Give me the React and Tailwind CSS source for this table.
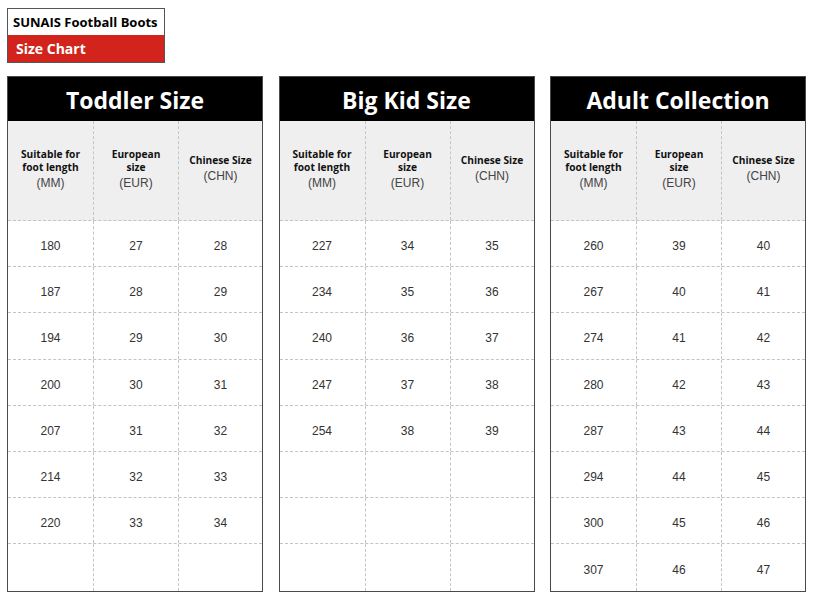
import React from "react";

const tables = [
  {
    title: "Toddler Size",
    rows: [
      ["180", "27", "28"],
      ["187", "28", "29"],
      ["194", "29", "30"],
      ["200", "30", "31"],
      ["207", "31", "32"],
      ["214", "32", "33"],
      ["220", "33", "34"],
      ["", "", ""],
    ],
  },
  {
    title: "Big Kid Size",
    rows: [
      ["227", "34", "35"],
      ["234", "35", "36"],
      ["240", "36", "37"],
      ["247", "37", "38"],
      ["254", "38", "39"],
      ["", "", ""],
      ["", "", ""],
      ["", "", ""],
    ],
  },
  {
    title: "Adult Collection",
    rows: [
      ["260", "39", "40"],
      ["267", "40", "41"],
      ["274", "41", "42"],
      ["280", "42", "43"],
      ["287", "43", "44"],
      ["294", "44", "45"],
      ["300", "45", "46"],
      ["307", "46", "47"],
    ],
  },
];

const heads = [
  [["Suitable for", "foot length"], "(MM)"],
  [["European", "size"], "(EUR)"],
  [["Chinese Size"], "(CHN)"],
];

function Table({ title, rows }) {
  return (
    <div className="w-[256px] border-[1.5px] border-[#4a4a4a] bg-white">
      <div className="h-[44px] bg-black text-white flex items-center justify-center font-['Open_Sans',sans-serif] font-bold text-[23px] leading-none pt-[2px]">
        {title}
      </div>
      <div className="grid grid-cols-[86px_85px_1fr] h-[100px] bg-[#efefef] border-b border-dashed border-[#c4c4c4]">
        {heads.map(([lines, unit], i) => (
          <div
            key={i}
            className={
              "flex flex-col items-center justify-center text-center pb-[4px] " +
              (i < 2 ? "border-r border-dashed border-[#c4c4c4]" : "")
            }
          >
            {lines.map((l, li) => (
              <div key={li} className="font-['Open_Sans',sans-serif] font-bold text-[10.2px] leading-[13.5px] text-[#111]">
                {l}
              </div>
            ))}
            <div className="font-['Liberation_Sans',Arial,sans-serif] text-[12px] leading-[14px] mt-[1px] text-[#444]">{unit}</div>
          </div>
        ))}
      </div>
      {rows.map((r, ri) => (
        <div
          key={ri}
          className={
            "grid grid-cols-[86px_85px_1fr] h-[46.2px] " +
            (ri < rows.length - 1 ? "border-b border-dashed border-[#c4c4c4]" : "")
          }
        >
          {r.map((c, ci) => (
            <div
              key={ci}
              className={
                "flex items-center justify-center pt-[5px] font-['Liberation_Sans',Arial,sans-serif] text-[12px] text-[#333] " +
                (ci < 2 ? "border-r border-dashed border-[#c4c4c4]" : "")
              }
            >
              {c}
            </div>
          ))}
        </div>
      ))}
    </div>
  );
}

export default function App() {
  return (
    <div className="w-[820px] h-[607px] bg-white pt-[8px] pl-[7px]">
      <div className="w-[158px] border border-[#555] font-['Open_Sans',sans-serif] font-bold text-[13px]">
        <div className="h-[26px] flex items-center px-[5px] pt-[1px] text-black">SUNAIS Football Boots</div>
        <div className="h-[27px] flex items-center px-[8px] bg-[#d2231c] text-white text-[14px]">Size Chart</div>
      </div>
      <div className="flex gap-[15.5px] mt-[13px]">
        {tables.map((t) => (
          <Table key={t.title} {...t} />
        ))}
      </div>
    </div>
  );
}
